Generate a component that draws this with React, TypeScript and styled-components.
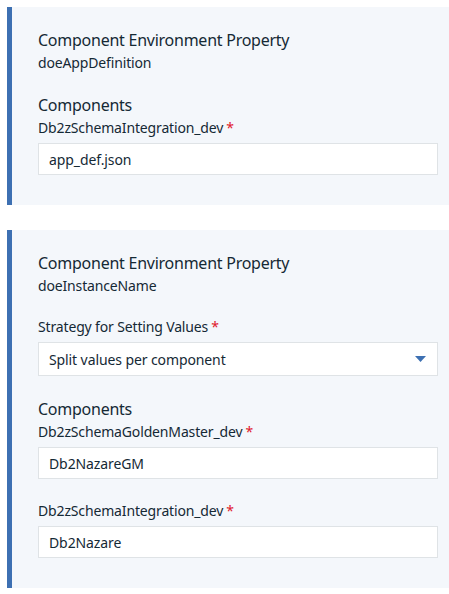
import React from 'react';
import styled, { createGlobalStyle } from 'styled-components';

const GlobalStyle = createGlobalStyle`
    html, body {
        margin: 0;
        padding: 0;
        background: #ffffff;
    }
    body {
        font-family: 'Noto Sans', 'Liberation Sans', sans-serif;
        color: #152935;
    }
`;

const Page = styled.div`
    display: flex;
    flex-direction: column;
    gap: 25px;
    padding: 7px 0 6px 7px;
`;

const Card = styled.section`
    display: flex;
    flex-direction: column;
    background: #f4f7fb;
    border-left: 5px solid #3d70b2;
    padding: 22px 11px 30px 26px;
`;

const Title = styled.h3`
    margin: 0;
    font-size: 16px;
    line-height: 22px;
    font-weight: 450;
    letter-spacing: -0.25px;
    color: #152935;
`;

const Subtitle = styled.div`
    margin-top: 2px;
    font-size: 14px;
    line-height: 20px;
    letter-spacing: -0.15px;
    color: #152935;
`;

const SectionTitle = styled(Title)<{ $gap?: number }>`
    margin-top: ${(p) => p.$gap ?? 21}px;
`;

const Field = styled.div<{ $gap?: number }>`
    display: flex;
    flex-direction: column;
    margin-top: ${(p) => p.$gap ?? 22}px;
`;

const Label = styled.label`
    font-size: 14px;
    line-height: 20px;
    letter-spacing: -0.15px;
    color: #152935;
    margin-bottom: 5px;
`;

const Required = styled.span`
    color: #e0182d;
    margin-left: 3px;
`;

const Input = styled.div`
    display: flex;
    align-items: center;
    height: 32px;
    box-sizing: border-box;
    padding: 0 10px;
    background: #ffffff;
    border: 1px solid #dfe3e6;
    font-size: 14px;
    letter-spacing: -0.1px;
    color: #152935;
`;

const Select = styled(Input)`
    height: 34px;
    justify-content: space-between;
    padding-right: 11px;
`;

const Arrow = () => (
    <svg width="11" height="6" viewBox="0 0 11 6">
        <polygon points="0,0 11,0 5.5,6" fill="#3d70b2" />
    </svg>
);

const FieldRow = ({ label, value, gap }: { label: string; value: string; gap?: number }) => (
    <Field $gap={gap}>
        <Label>
            {label}
            <Required>*</Required>
        </Label>
        <Input>{value}</Input>
    </Field>
);

const App = () => {
    return (
        <>
            <GlobalStyle />
            <Page>
                <Card>
                    <Title>Component Environment Property</Title>
                    <Subtitle>doeAppDefinition</Subtitle>
                    <SectionTitle>Components</SectionTitle>
                    <FieldRow label="Db2zSchemaIntegration_dev" value="app_def.json" gap={2} />
                </Card>
                <Card>
                    <Title>Component Environment Property</Title>
                    <Subtitle>doeInstanceName</Subtitle>
                    <Field $gap={21}>
                        <Label>
                            Strategy for Setting Values
                            <Required>*</Required>
                        </Label>
                        <Select>
                            <span>Split values per component</span>
                            <Arrow />
                        </Select>
                    </Field>
                    <SectionTitle $gap={22}>Components</SectionTitle>
                    <FieldRow label="Db2zSchemaGoldenMaster_dev" value="Db2NazareGM" gap={2} />
                    <FieldRow label="Db2zSchemaIntegration_dev" value="Db2Nazare" />
                </Card>
            </Page>
        </>
    );
};

export default App;
